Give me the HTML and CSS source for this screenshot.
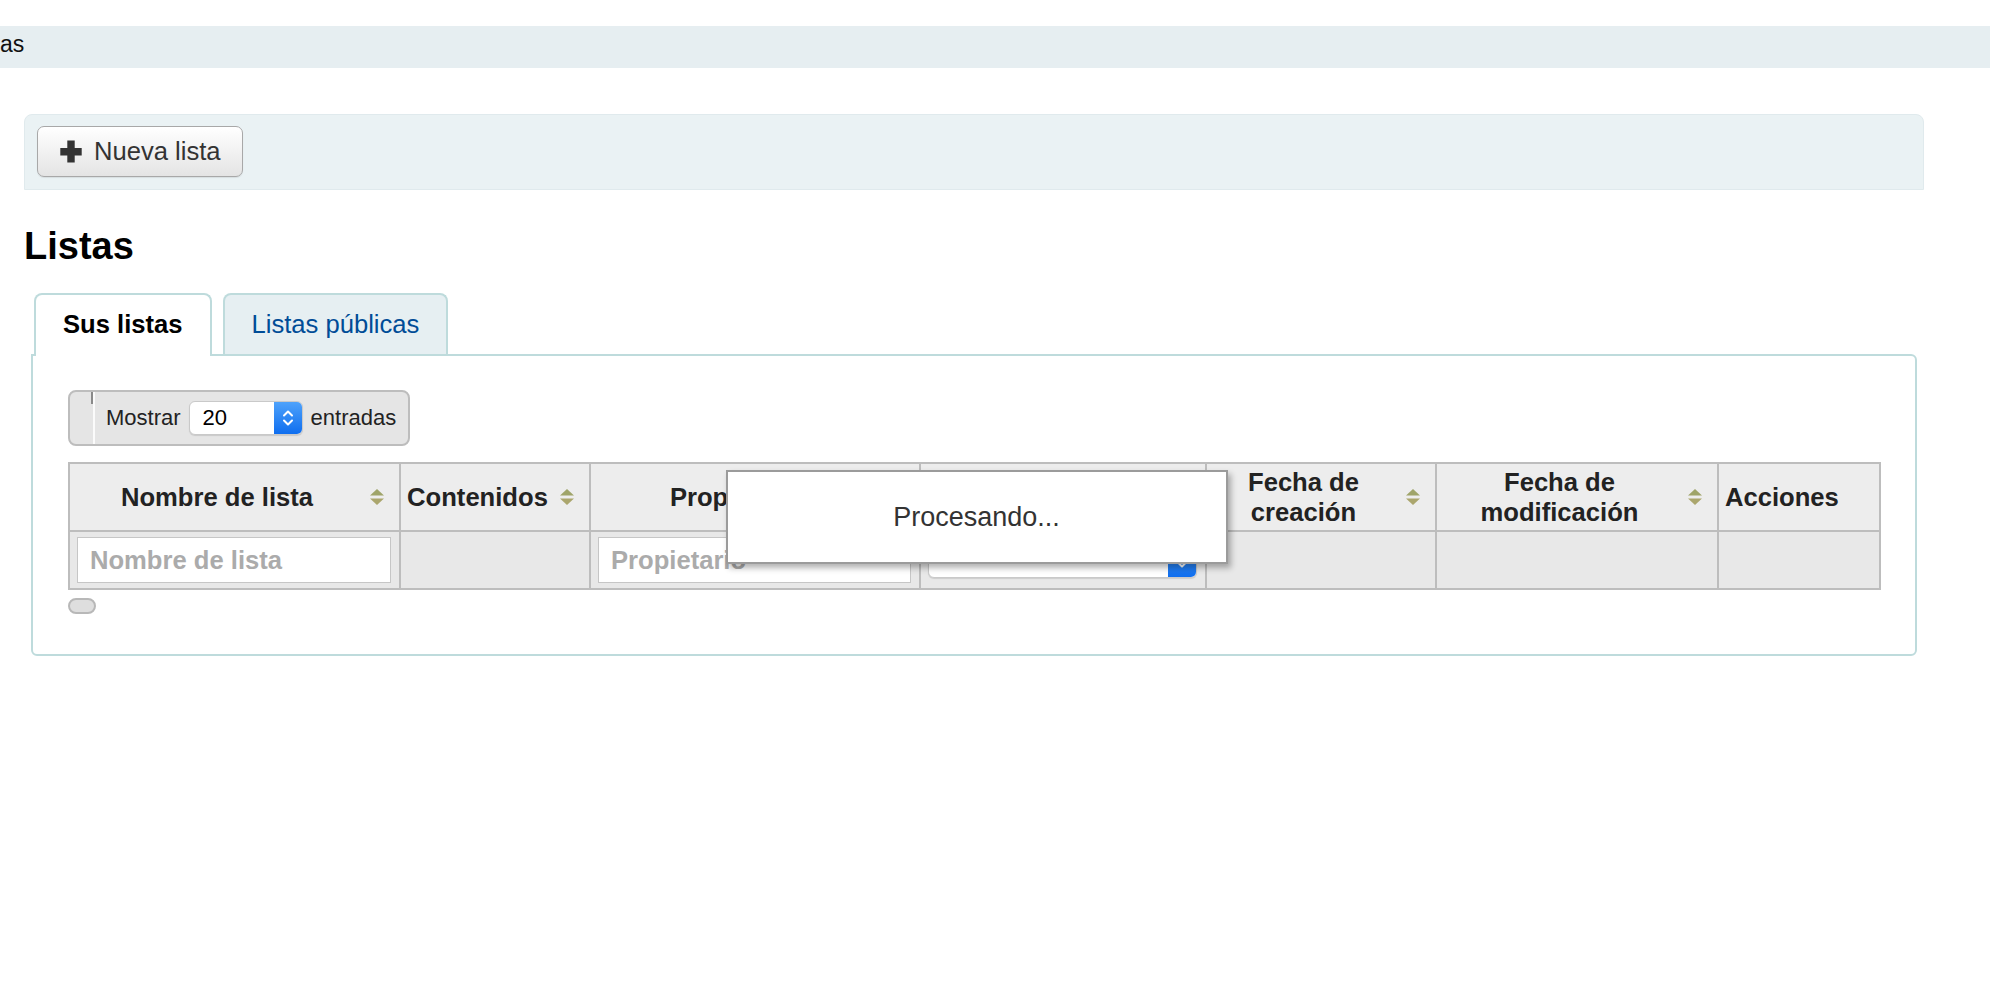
FILE: index.html
```html
<!DOCTYPE html>
<html lang="es">
<head>
    <meta charset="UTF-8">
    <meta name="viewport" content="width=device-width, initial-scale=1.0">
    <title>Listas</title>
    <link rel="stylesheet" href="styles.css">
</head>
<body>
    <!-- migas de pan (desplazadas, solo se ve el final) -->
    <nav class="breadcrumbs">as</nav>

    <main class="main">
        <div class="toolbar">
            <button class="btn-new" type="button">
                <svg class="icon-plus" viewBox="0 0 22 23" width="22" height="23" aria-hidden="true">
                    <path d="M7.3 0.5h7.4v7.4h7v7.6h-7v7h-7.4v-7h-7v-7.6h7z"/>
                </svg>
                Nueva lista
            </button>
        </div>

        <h1 class="title">Listas</h1>

        <ul class="tabs">
            <li class="tab active"><a href="#">Sus listas</a></li>
            <li class="tab"><a href="#">Listas públicas</a></li>
        </ul>

        <div class="panel">
            <div class="length-box">
                <span class="length-handle"></span>
                <label class="length">
                    Mostrar
                    <span class="select select-length">
                        <span class="select-value">20</span>
                        <span class="select-arrows">
                            <svg viewBox="0 0 12 22" width="12" height="22" aria-hidden="true">
                                <polyline points="2,8.5 6,4.5 10,8.5"/>
                                <polyline points="2,13.5 6,17.5 10,13.5"/>
                            </svg>
                        </span>
                    </span>
                    entradas
                </label>
            </div>

            <div class="table-wrap">
                <table class="lists">
                    <colgroup>
                        <col class="col-name">
                        <col class="col-contents">
                        <col class="col-owner">
                        <col class="col-sort">
                        <col class="col-created">
                        <col class="col-modified">
                        <col class="col-actions">
                    </colgroup>
                    <thead>
                        <tr>
                            <th><div class="th-inner"><span class="th-label">Nombre de lista</span><svg class="sort-icon" viewBox="0 0 14 18" width="14" height="18"><polygon class="up" points="7,1 14,7.5 0,7.5"/><polygon class="down" points="0,10.5 14,10.5 7,17"/></svg></div></th>
                            <th><div class="th-inner"><span class="th-label">Contenidos</span><svg class="sort-icon" viewBox="0 0 14 18" width="14" height="18"><polygon class="up" points="7,1 14,7.5 0,7.5"/><polygon class="down" points="0,10.5 14,10.5 7,17"/></svg></div></th>
                            <th><div class="th-inner"><span class="th-label">Propietario</span><svg class="sort-icon" viewBox="0 0 14 18" width="14" height="18"><polygon class="up" points="7,1 14,7.5 0,7.5"/><polygon class="down" points="0,10.5 14,10.5 7,17"/></svg></div></th>
                            <th><div class="th-inner"><span class="th-label"></span><svg class="sort-icon" viewBox="0 0 14 18" width="14" height="18"><polygon class="up" points="7,1 14,7.5 0,7.5"/><polygon class="down" points="0,10.5 14,10.5 7,17"/></svg></div></th>
                            <th><div class="th-inner"><span class="th-label">Fecha de creación</span><svg class="sort-icon" viewBox="0 0 14 18" width="14" height="18"><polygon class="up" points="7,1 14,7.5 0,7.5"/><polygon class="down" points="0,10.5 14,10.5 7,17"/></svg></div></th>
                            <th><div class="th-inner"><span class="th-label">Fecha de modificación</span><svg class="sort-icon" viewBox="0 0 14 18" width="14" height="18"><polygon class="up" points="7,1 14,7.5 0,7.5"/><polygon class="down" points="0,10.5 14,10.5 7,17"/></svg></div></th>
                            <th class="no-sort">Acciones</th>
                        </tr>
                        <tr class="filters">
                            <td><input class="filter-input" type="text" placeholder="Nombre de lista"></td>
                            <td></td>
                            <td><input class="filter-input" type="text" placeholder="Propietario"></td>
                            <td>
                                <span class="select select-filter">
                                    <span class="select-value"></span>
                                    <span class="select-arrows">
                                        <svg viewBox="0 0 12 22" width="12" height="22" aria-hidden="true">
                                            <polyline points="2,8.5 6,4.5 10,8.5"/>
                                            <polyline points="2,13.5 6,17.5 10,13.5"/>
                                        </svg>
                                    </span>
                                </span>
                            </td>
                            <td></td>
                            <td></td>
                            <td></td>
                        </tr>
                    </thead>
                </table>
                <div class="processing">Procesando...</div>
            </div>

            <div class="pager"></div>
        </div>
    </main>
</body>
</html>
```

FILE: styles.css
```css
:root {
    --font: "Liberation Sans", Arial, Helvetica, sans-serif;
    --tab-border: #bedbdc;
    --cell-border: #bdbdbd;
    --link-color: #004c97;
}

body {
    margin: 0;
    background: #fff;
    color: #000;
    font-family: var(--font);
}

/* migas de pan */
.breadcrumbs {
    margin-top: 26px;
    height: 42px;
    box-sizing: border-box;
    padding-bottom: 6px;
    line-height: 36px;
    font-size: 23px;
    color: #111;
    background: #e6eef1;
    white-space: nowrap;
    overflow: hidden;
}

.main {
    padding: 46px 66px 0 24px;
}

/* barra de herramientas */
.toolbar {
    background: #eaf2f4;
    border: 1px solid #e0eaed;
    border-radius: 8px 8px 0 0;
    padding: 11px 12px 12px;
}

.btn-new {
    display: inline-flex;
    align-items: center;
    gap: 12px;
    height: 51px;
    padding: 0 21px 0 22px;
    font-family: var(--font);
    font-size: 25.6px;
    color: #333;
    background: linear-gradient(#fff, #e4e4e4);
    border: 1px solid #a8a8a8;
    border-radius: 7px;
    box-shadow: inset 0 1px 0 #fff, 0 1px 1px rgba(0, 0, 0, 0.08);
    cursor: pointer;
}

.icon-plus {
    fill: #333;
}

.title {
    margin: 33px 0 24px;
    font-size: 38px;
    line-height: 46px;
    font-weight: bold;
}

/* pestañas */
.tabs {
    list-style: none;
    margin: 0 7px;
    padding: 0 0 0 3px;
    display: flex;
    align-items: flex-end;
    gap: 11px;
}

.tab a {
    display: block;
    padding: 14px 27px 14px;
    border: 2px solid var(--tab-border);
    border-bottom: 0;
    border-radius: 8px 8px 0 0;
    font-size: 25.6px;
    line-height: 31px;
    color: var(--link-color);
    background: #e6eff2;
    text-decoration: none;
}

.tab.active a {
    position: relative;
    margin-bottom: -2px;
    padding-bottom: 16px;
    color: #000;
    font-weight: bold;
    background: #fff;
}

.panel {
    margin: 0 7px;
    border: 2px solid var(--tab-border);
    border-radius: 0 6px 6px 6px;
    padding: 34px 36px 40px 35px;
}

/* selector de entradas */
.length-box {
    display: flex;
    width: fit-content;
    height: 56px;
    box-sizing: border-box;
    border: 2px solid #bdbdbd;
    border-radius: 8px;
    background: #e5e5e5;
}

.length-handle {
    width: 23px;
    border-right: 2px solid #fbfbfb;
    background: linear-gradient(#8a8a8a, #8a8a8a) right top / 2px 12px no-repeat;
}

.length {
    display: flex;
    align-items: center;
    gap: 8px;
    padding: 0 12px 0 11px;
    font-size: 22px;
    color: #222;
}

.select {
    display: flex;
    box-sizing: border-box;
    background: #fff;
    border: 1px solid #c9c9c9;
    border-radius: 6px;
    box-shadow: 0 1px 1px rgba(0, 0, 0, 0.12);
    overflow: hidden;
}

.select-length {
    width: 114px;
    height: 34px;
}

.select-value {
    flex: 1;
    padding-left: 13px;
    line-height: 32px;
    color: #000;
}

.select-arrows {
    width: 28px;
    display: flex;
    align-items: center;
    justify-content: center;
    background: linear-gradient(#4ea2fb, #0f6eef);
}

.select-arrows polyline {
    fill: none;
    stroke: #fff;
    stroke-width: 2;
    stroke-linecap: round;
    stroke-linejoin: round;
}

/* tabla */
.table-wrap {
    position: relative;
    margin-top: 16px;
}

.lists {
    width: 100%;
    table-layout: fixed;
    border-collapse: collapse;
    border: 2px solid var(--cell-border);
}

.col-name { width: 331px; }
.col-contents { width: 190px; }
.col-owner { width: 330px; }
.col-sort { width: 286px; }
.col-created { width: 230px; }
.col-modified { width: 282px; }
.col-actions { width: 162px; }

.lists th,
.lists td {
    border: 2px solid var(--cell-border);
}

.lists th {
    padding: 3px 15px 3px 6px;
    background: #ededed;
    color: #222;
    font-size: 25.6px;
    line-height: 30px;
    font-weight: bold;
    text-align: center;
    vertical-align: middle;
}

.lists th.no-sort {
    text-align: left;
}

.th-inner {
    display: flex;
    align-items: center;
    gap: 12px;
}

.th-label {
    flex: 1;
}

.sort-icon {
    flex: none;
}

.sort-icon .up {
    fill: #9fa469;
}

.sort-icon .down {
    fill: #aba66d;
}

.lists td {
    height: 46px;
    padding: 5px 8px 5px 7px;
    background: #e8e8e8;
    vertical-align: middle;
}

.filter-input {
    display: block;
    width: 100%;
    height: 46px;
    box-sizing: border-box;
    padding: 0 12px;
    border: 1px solid #c6c6c6;
    box-shadow: inset 0 0 0 1px #fff;
    background: #fff;
    font-family: var(--font);
    font-size: 25.6px;
    font-weight: bold;
    color: #333;
}

.filter-input::placeholder {
    color: #ababab;
    opacity: 1;
}

.select-filter {
    width: 100%;
    height: 36px;
}

.processing {
    position: absolute;
    top: 8px;
    left: 50%;
    margin-left: -248px;
    width: 502px;
    height: 94px;
    box-sizing: border-box;
    border: 2px solid #9b9b9b;
    background: #fff;
    box-shadow: 3px 4px 6px rgba(0, 0, 0, 0.3);
    font-size: 27px;
    line-height: 90px;
    text-align: center;
    color: #333;
}

.pager {
    width: 28px;
    height: 16px;
    box-sizing: border-box;
    margin-top: 8px;
    border: 2px solid #b8b8b8;
    border-radius: 8px;
    background: #dedede;
}
```
